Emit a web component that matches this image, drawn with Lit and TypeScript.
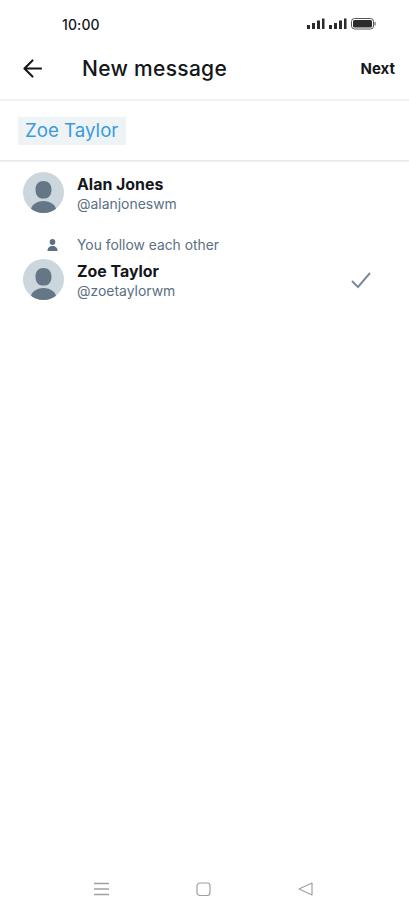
import { LitElement, html, css, svg } from "lit";
import { customElement } from "lit/decorators.js";

const avatar = svg`<svg class="avatar" viewBox="0 0 41 41"><circle cx="20.5" cy="20.5" r="20.5" fill="#ccd6dd"/><clipPath id="c"><circle cx="20.5" cy="20.5" r="20.5"/></clipPath><g clip-path="url(#c)" fill="#657786"><path d="M20.5 9c4.800 0 8 3.300 8 8.500 0 3.400-1 6-2.800 7.500-1.200 1-3.100 1.500-5.200 1.500s-4-.5-5.200-1.500c-1.800-1.500-2.800-4.100-2.800-7.500 0-5.200 3.200-8.500 8-8.500z"/><ellipse cx="20.500" cy="39.500" rx="13" ry="10.500"/></g></svg>`;

@customElement("app-root")
export class AppRoot extends LitElement {
  static styles = css`
    :host { display: block; width: 409px; height: 914px; background: #fff; font-family: Inter, "Liberation Sans", sans-serif; color: #14171a; overflow: hidden; }
    .page { display: flex; flex-direction: column; height: 914px; }
    .status { height: 48px; flex: none; display: flex; align-items: center; justify-content: space-between; padding: 0 32px 0 62px; box-sizing: border-box; }
    .time { font-size: 14px; font-weight: 500; letter-spacing: 0.1px; }
    .status-icons { display: flex; align-items: center; }
    .header { height: 53px; flex: none; display: flex; align-items: center; padding: 0 14px 11px 23px; box-sizing: border-box; border-bottom: 2px solid #eff1f2; }
    .back { width: 19px; height: 19px; flex: none; }
    .title { flex: 1; margin-left: 40px; font-size: 21px; font-weight: 500; letter-spacing: 0.3px; }
    .next { font-size: 15px; font-weight: 700; }
    .search { height: 60px; flex: none; display: flex; align-items: center; padding: 0 18px; box-sizing: border-box; border-bottom: 1px solid #e6e8ea; box-shadow: 0 1px 1px #f2f3f4; }
    .chip { background: #eef3f5; color: #3a9bdc; font-size: 18.7px; font-weight: 400; height: 28px; line-height: 28px; padding: 0 8px 0 7px; }
    .list { padding: 11px 37px 0 23px; flex: 1; }
    .row { display: flex; align-items: center; gap: 13px; height: 41px; }
    .avatar { width: 41px; height: 41px; flex: none; }
    .info { flex: 1; display: flex; flex-direction: column; height: 41px; }
    .name { font-size: 15.9px; font-weight: 700; line-height: 20px; margin-top: 3px; }
    .handle { font-size: 13.95px; color: #5b7083; line-height: 17px; }
    .context { display: flex; align-items: center; gap: 13px; height: 18px; margin-top: 23px; margin-bottom: 5px; font-size: 13.85px; color: #5b7083; }
    .context-icon { display: flex; justify-content: center; padding-left: 18px; box-sizing: border-box; width: 41px; }
    .check { width: 22px; height: 20px; }
    .nav { height: 50px; flex: none; display: flex; align-items: center; box-sizing: border-box; padding: 0 0 0 94px; }
    .nav svg { display: block; }
    .nav .square { margin-left: 87px; }
    .nav .tri { margin-left: 87px; }
  `;

  render() {
    return html`<div class="page">
      <div class="status">
        <span class="time">10:00</span>
        <span class="status-icons">
          <svg width="70" height="14" viewBox="0 0 70 14" fill="#2b2b2b">
            <rect x="0" y="8" width="3" height="4"/><rect x="5" y="6" width="3" height="6"/><rect x="10" y="3.500" width="3" height="8.500"/><rect x="15" y="1.500" width="2.500" height="10.500"/>
            <rect x="22" y="8" width="3" height="4"/><rect x="27" y="6" width="3" height="6"/><rect x="32" y="3.500" width="3" height="8.500"/><rect x="37" y="1.500" width="2.500" height="10.500"/>
            <rect x="44.500" y="1.500" width="22" height="10.500" rx="3" fill="none" stroke="#555" stroke-width="1"/>
            <rect x="46" y="3" width="19" height="7.500" rx="1.500"/>
            <rect x="67.300" y="5" width="1.500" height="3.500" fill="#888"/>
          </svg>
        </span>
      </div>
      <div class="header">
        <svg class="back" viewBox="0 0 20 20" fill="none" stroke="#14171a" stroke-width="2.100" stroke-linecap="round" stroke-linejoin="round"><path d="M1.500 10H19M10 1.500L1.500 10L10 18.500"/></svg>
        <span class="title">New message</span>
        <span class="next">Next</span>
      </div>
      <div class="search"><span class="chip">Zoe Taylor</span></div>
      <div class="list">
        <div class="row">
          ${avatar}
          <div class="info"><span class="name">Alan Jones</span><span class="handle">@alanjoneswm</span></div>
        </div>
        <div class="context">
          <span class="context-icon"><svg width="11" height="12" viewBox="0 0 11 12" fill="#5b7083"><ellipse cx="5.500" cy="3" rx="2.800" ry="3"/><path d="M.5 12c0-3.500 2-5 5-5s5 1.500 5 5z"/></svg></span>
          <span>You follow each other</span>
        </div>
        <div class="row">
          ${avatar}
          <div class="info"><span class="name">Zoe Taylor</span><span class="handle">@zoetaylorwm</span></div>
          <svg class="check" viewBox="0 0 22 20" fill="none" stroke="#7d8c99" stroke-width="2"><path d="M2 11l6 6L20 3"/></svg>
        </div>
      </div>
      <div class="nav">
        <svg width="15" height="14" viewBox="0 0 15 14" stroke="#a0a0a0" stroke-width="1.300"><path d="M0 1.500H15M0 7H15M0 12.500H15"/></svg>
        <svg class="square" width="15" height="14" viewBox="0 0 15 14" fill="none" stroke="#a0a0a0" stroke-width="1.200"><rect x="1" y="1" width="13" height="12.500" rx="3"/></svg>
        <svg class="tri" width="15" height="14" viewBox="0 0 15 14" fill="none" stroke="#a0a0a0" stroke-width="1.200" stroke-linejoin="round"><path d="M14 1V13L1 7z"/></svg>
      </div>
    </div>`;
  }
}
